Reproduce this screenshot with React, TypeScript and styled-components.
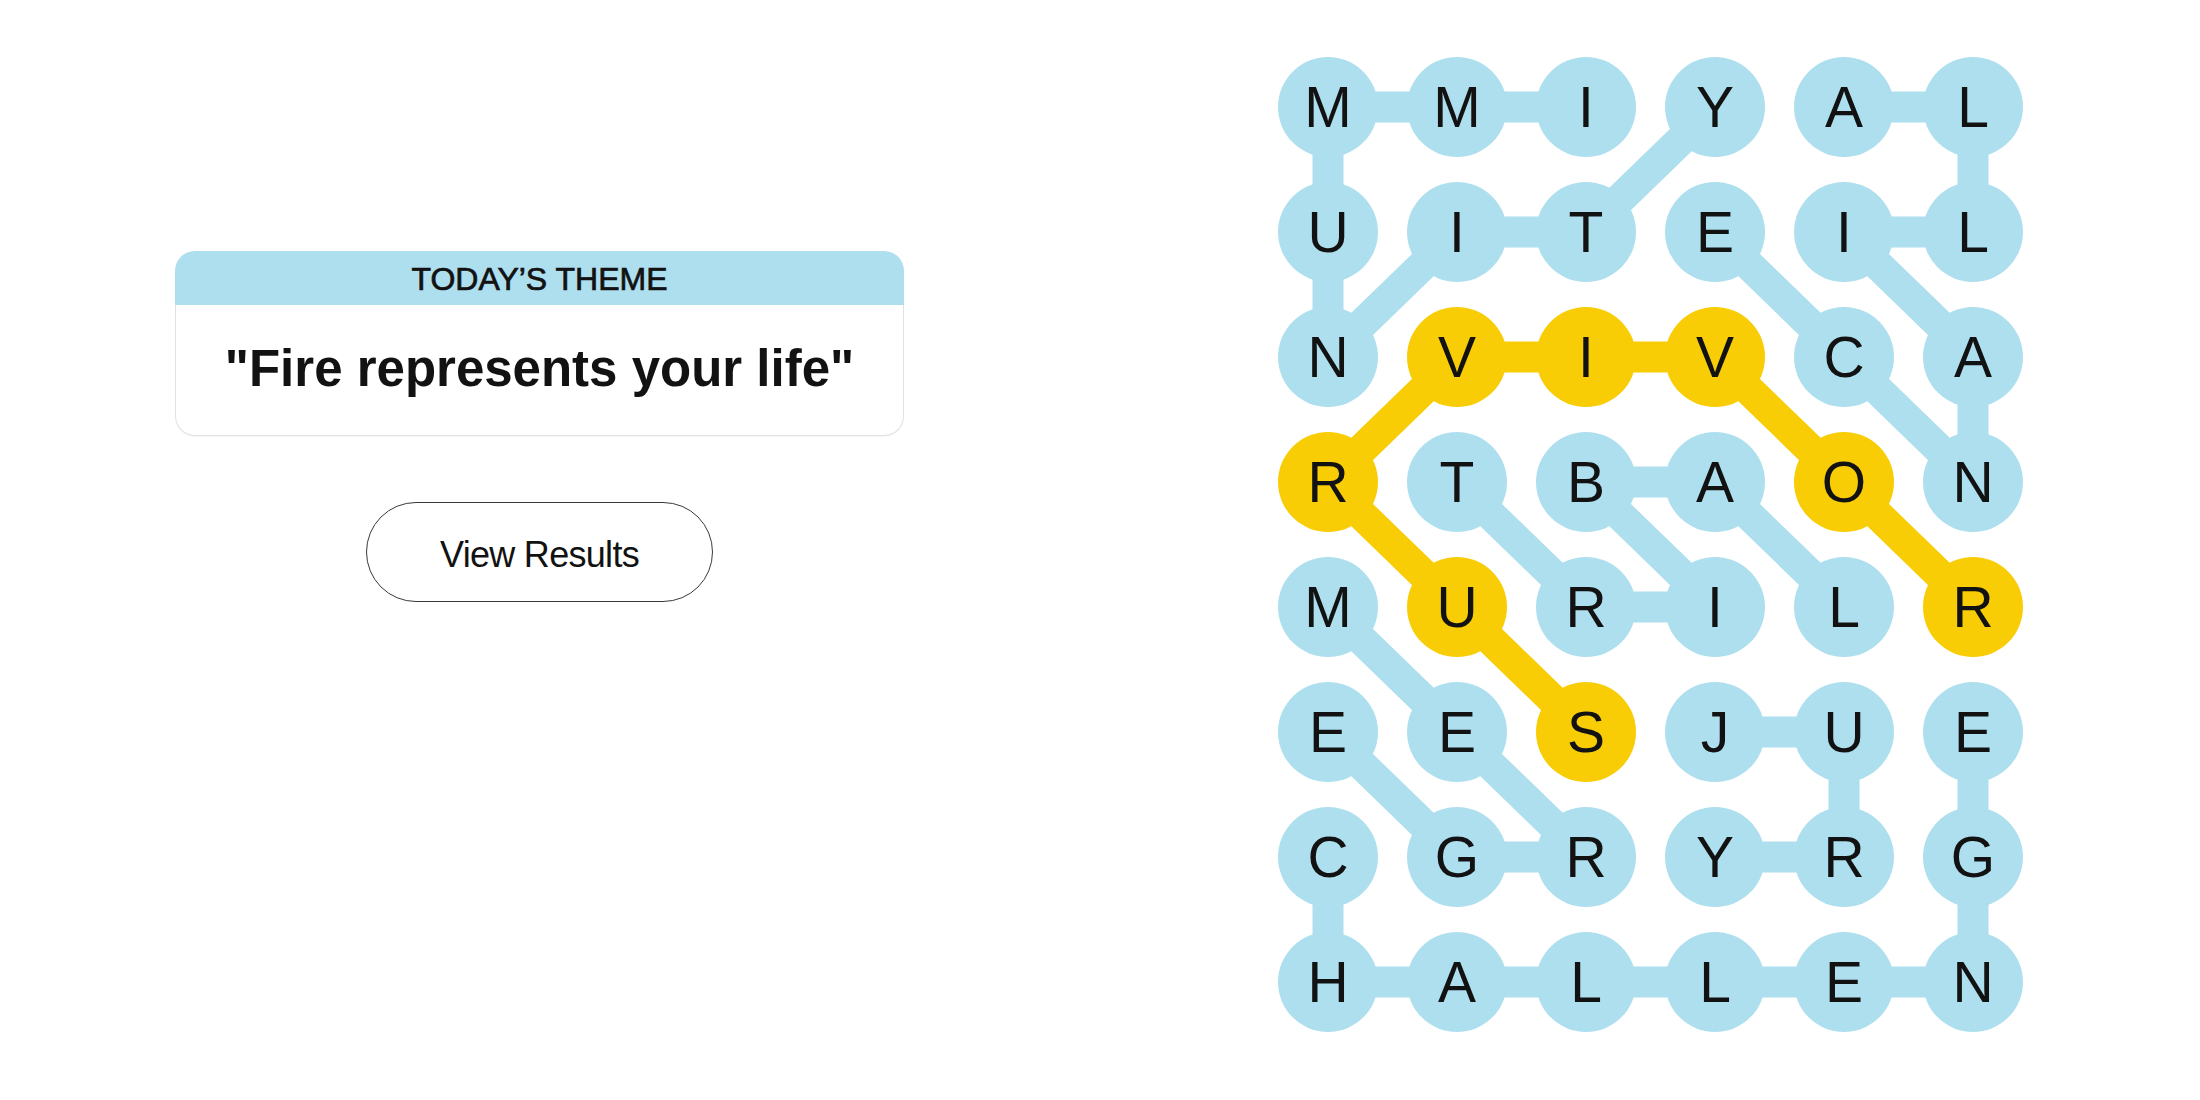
import React from "react";
import styled, { createGlobalStyle } from "styled-components";

const GlobalStyle = createGlobalStyle`
  html, body { margin: 0; padding: 0; background: #ffffff; }
  body { font-family: "Liberation Sans", Arial, sans-serif; color: #121212; }
`;

const BLUE = "#aedfee";
const YELLOW = "#f8cd05";
const COL = 129;
const ROW = 125;
const SIZE = 100;

const GRID = [
  "MMIYAL",
  "UITEIL",
  "NVIVCA",
  "RTBAON",
  "MURILR",
  "EESJUE",
  "CGRYRG",
  "HALLEN",
];

type P = [number, number];

const SPANGRAM: P[] = [
  [5, 2], [4, 1], [3, 0], [2, 1], [2, 2], [2, 3], [3, 4], [4, 5],
];

const WORDS: P[][] = [
  [[0, 2], [0, 1], [0, 0], [1, 0], [2, 0], [1, 1], [1, 2], [0, 3]],
  [[0, 4], [0, 5], [1, 5], [1, 4], [2, 5], [3, 5], [2, 4], [1, 3]],
  [[3, 1], [4, 2], [4, 3], [3, 2], [3, 3], [4, 4]],
  [[4, 0], [5, 1], [6, 2], [6, 1], [5, 0]],
  [[6, 0], [7, 0], [7, 1], [7, 2], [7, 3], [7, 4], [7, 5], [6, 5], [5, 5]],
  [[5, 3], [5, 4], [6, 4], [6, 3]],
];

const isSpangram = (r: number, c: number) =>
  SPANGRAM.some(([a, b]) => a === r && b === c);

const Page = styled.main`
  display: flex;
  align-items: flex-start;
  gap: 374px;
  padding: 57px 0 0 175px;
  height: 1100px;
  box-sizing: border-box;
`;

const Side = styled.section`
  width: 729px;
  margin-top: 194px;
  display: flex;
  flex-direction: column;
  align-items: center;
  gap: 66px;
`;

const ThemeCard = styled.div`
  width: 100%;
  display: flex;
  flex-direction: column;
`;

const ThemeHeader = styled.div`
  background: ${BLUE};
  border-radius: 20px 20px 0 0;
  height: 54px;
  box-sizing: border-box;
  padding-top: 3px;
  line-height: 51px;
  text-align: center;
  font-family: "Liberation Sans", Arial, sans-serif;
  font-size: 32px;
  font-weight: 400;
  -webkit-text-stroke: 0.7px #121212;
  color: #121212;
`;

const ThemeBody = styled.div`
  border: 1.5px solid #e2e2e2;
  border-top: none;
  border-radius: 0 0 20px 20px;
  box-shadow: 0 1px 1px rgba(0, 0, 0, 0.04);
  padding: 35px 0 37px;
  text-align: center;
  font-family: "Liberation Sans", Arial, sans-serif;
  font-weight: 700;
  font-size: 51px;
  line-height: 58px;
  color: #121212;
`;

const ResultsButton = styled.button`
  width: 347px;
  height: 100px;
  border-radius: 50px;
  border: 1.5px solid #3a3a3a;
  background: #ffffff;
  color: #121212;
  font-family: "Liberation Sans", Arial, sans-serif;
  font-size: 36px;
  letter-spacing: -0.7px;
  padding: 6px 0 0;
  cursor: pointer;
`;

const Board = styled.div`
  position: relative;
  display: grid;
  grid-template-columns: repeat(6, ${SIZE}px);
  grid-auto-rows: ${SIZE}px;
  column-gap: ${COL - SIZE}px;
  row-gap: ${ROW - SIZE}px;
`;

const Links = styled.svg`
  position: absolute;
  inset: 0;
  z-index: 0;
  pointer-events: none;
`;

const Tile = styled.div<{ $found: "theme" | "spangram" }>`
  position: relative;
  z-index: 1;
  width: ${SIZE}px;
  height: ${SIZE}px;
  border-radius: 50%;
  background: ${(p) => (p.$found === "spangram" ? YELLOW : BLUE)};
  display: flex;
  align-items: center;
  justify-content: center;
  font-family: "Liberation Sans", Arial, sans-serif;
  font-size: 57px;
  font-weight: 400;
  line-height: 1;
  padding-top: 1px;
  box-sizing: border-box;
  color: #121212;
  user-select: none;
`;

const cx = (c: number) => SIZE / 2 + c * COL;
const cy = (r: number) => SIZE / 2 + r * ROW;

function Path({ pts, color }: { pts: P[]; color: string }) {
  const d = pts.map(([r, c], i) => `${i ? "L" : "M"}${cx(c)} ${cy(r)}`).join(" ");
  return (
    <path
      d={d}
      fill="none"
      stroke={color}
      strokeWidth={31}
      strokeLinejoin="round"
      strokeLinecap="round"
    />
  );
}

export default function App() {
  const w = 6 * SIZE + 5 * (COL - SIZE);
  const h = 8 * SIZE + 7 * (ROW - SIZE);
  return (
    <>
      <GlobalStyle />
      <Page>
        <Side>
          <ThemeCard>
            <ThemeHeader>TODAY’S THEME</ThemeHeader>
            <ThemeBody>"Fire represents your life"</ThemeBody>
          </ThemeCard>
          <ResultsButton type="button">View Results</ResultsButton>
        </Side>
        <Board>
          <Links width={w} height={h} viewBox={`0 0 ${w} ${h}`}>
            {WORDS.map((word, i) => (
              <Path key={i} pts={word} color={BLUE} />
            ))}
            <Path pts={SPANGRAM} color={YELLOW} />
          </Links>
          {GRID.map((row, r) =>
            row.split("").map((ch, c) => (
              <Tile key={`${r}-${c}`} $found={isSpangram(r, c) ? "spangram" : "theme"}>
                {ch}
              </Tile>
            ))
          )}
        </Board>
      </Page>
    </>
  );
}
